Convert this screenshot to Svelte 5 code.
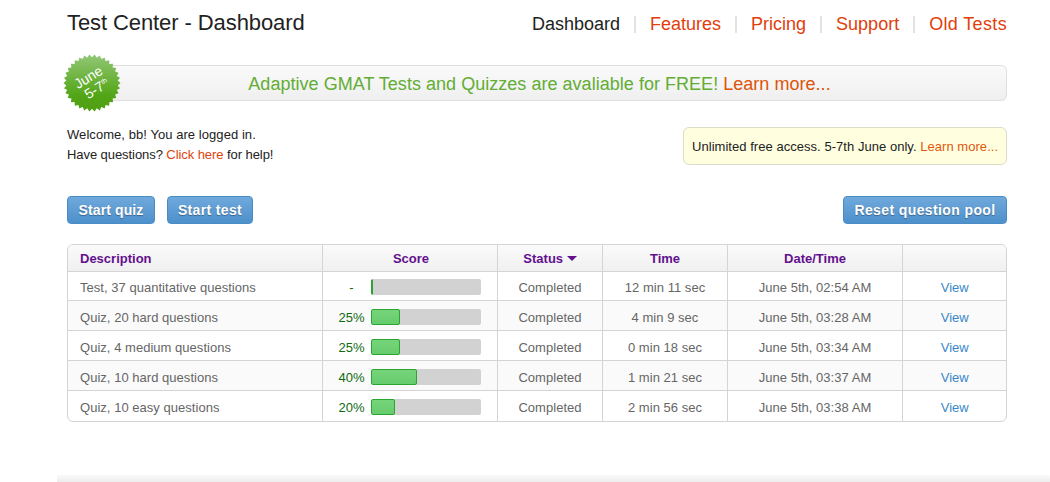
<script>
  const rows = [
    { d: 'Test, 37 quantitative questions', s: '-', w: 2, t: '12 min 11 sec', dt: 'June 5th, 02:54 AM' },
    { d: 'Quiz, 20 hard questions', s: '25%', w: 29, t: '4 min 9 sec', dt: 'June 5th, 03:28 AM' },
    { d: 'Quiz, 4 medium questions', s: '25%', w: 29, t: '0 min 18 sec', dt: 'June 5th, 03:34 AM' },
    { d: 'Quiz, 10 hard questions', s: '40%', w: 46, t: '1 min 21 sec', dt: 'June 5th, 03:37 AM' },
    { d: 'Quiz, 10 easy questions', s: '20%', w: 24, t: '2 min 56 sec', dt: 'June 5th, 03:38 AM' }
  ];
  const nav = ['Features', 'Pricing', 'Support', 'Old Tests'];
  const teeth = 34;
  const star = Array.from({ length: teeth * 2 }, (_, i) => {
    const r = i % 2 ? 25.8 : 28.5;
    const a = (i * Math.PI) / teeth;
    return `${(29 + r * Math.cos(a)).toFixed(2)},${(29 + r * Math.sin(a)).toFixed(2)}`;
  }).join(' ');
</script>

<div class="page">
  <header>
    <h1>Test Center - Dashboard</h1>
    <nav>
      <span class="current">Dashboard</span>
      {#each nav as item}
        <i class="sep"></i>
        <a href="#x">{item}</a>
      {/each}
    </nav>
  </header>

  <div class="banner">
    <svg class="badge" width="58" height="58" viewBox="0 0 58 58">
      <defs>
        <linearGradient id="bg" x1="0" y1="0" x2="0" y2="1">
          <stop offset="0" stop-color="#93c777" />
          <stop offset="0.72" stop-color="#52a516" />
          <stop offset="1" stop-color="#4f9f12" />
        </linearGradient>
      </defs>
      <polygon points={star} fill="url(#bg)" />
      <g transform="rotate(-32 29 29)" fill="#fff" font-family="Liberation Sans, Arial, sans-serif" text-anchor="middle">
        <text x="29" y="27" font-size="14">June</text>
        <text x="30" y="41" font-size="14">5-7<tspan font-size="7" dy="-5">th</tspan></text>
      </g>
    </svg>
    <p>Adaptive GMAT Tests and Quizzes are avaliable for FREE! <a href="#x">Learn more...</a></p>
  </div>

  <section class="intro">
    <div class="welcome">
      <div class="l1">Welcome, bb! You are logged in.</div>
      <div class="l2">Have questions? <a href="#x">Click here</a> for help!</div>
    </div>
    <div class="notice">Unlimited free access. 5-7th June only. <a href="#x">Learn more...</a></div>
  </section>

  <div class="actions">
    <button class="quiz">Start quiz</button>
    <button class="test">Start test</button>
    <button class="reset">Reset question pool</button>
  </div>

  <div class="table-wrap">
    <table>
      <colgroup>
        <col class="c1" /><col class="c2" /><col class="c3" /><col class="c4" /><col class="c5" /><col />
      </colgroup>
      <thead>
        <tr>
          <th class="left">Description</th>
          <th class="sc">Score</th>
          <th>Status <span class="caret"></span></th>
          <th>Time</th>
          <th>Date/Time</th>
          <th></th>
        </tr>
      </thead>
      <tbody>
        {#each rows as r}
          <tr>
            <td class="left">{r.d}</td>
            <td>
              <div class="score">
                <span class="pct">{r.s}</span>
                <span class="track"><span class="fill" style="width:{r.w}px"></span></span>
              </div>
            </td>
            <td>Completed</td>
            <td>{r.t}</td>
            <td>{r.dt}</td>
            <td><a class="view" href="#x">View</a></td>
          </tr>
        {/each}
      </tbody>
    </table>
  </div>

  <div class="footer"></div>
</div>

<style>
  :global(body) {
    margin: 0;
    background: #fff;
    font-family: "Liberation Sans", Arial, sans-serif;
    color: #1a1a1a;
    overflow: hidden;
  }
  .page {
    width: 1050px;
    height: 482px;
    box-sizing: border-box;
    padding: 0 43px 0 67px;
    position: relative;
    overflow: hidden;
  }
  a { color: #e0440e; text-decoration: none; }
  header {
    height: 65px;
    display: flex;
    justify-content: space-between;
    align-items: flex-start;
  }
  h1 {
    margin: 10px 0 0;
    font-size: 22px;
    line-height: 26px;
    font-weight: 400;
    letter-spacing: -0.09px;
    color: #222;
  }
  nav {
    display: flex;
    align-items: center;
    margin-top: 14px;
    font-size: 18px;
    line-height: 20px;
  }
  nav a { color: #e23d0b; }
  nav a:last-child { letter-spacing: 0.35px; }
  .current { color: #222; }
  .sep {
    width: 2px;
    height: 17px;
    background: #e6e2df;
    margin: 0 14px;
  }
  .banner {
    height: 36px;
    box-sizing: border-box;
    border: 1px solid #dfdfdf;
    border-left: 0;
    border-radius: 0 6px 6px 0;
    margin-left: 30px;
    background: linear-gradient(#fafafa, #efefef);
    position: relative;
    display: flex;
    align-items: center;
    justify-content: center;
    padding: 3px 24px 0 0;
  }
  .banner p {
    margin: 0;
    font-size: 18px;
    letter-spacing: 0.03px;
    color: #62ad33;
  }
  .banner a { color: #dd5409; }
  .badge {
    position: absolute;
    left: -34px;
    top: -12px;
  }
  .intro {
    display: flex;
    justify-content: space-between;
    align-items: flex-start;
    margin-top: 23px;
    height: 72px;
    font-size: 13px;
  }
  .welcome { line-height: 20px; padding-top: 1px; color: #222; }
  .l1 { letter-spacing: 0.06px; }
  .l2 { letter-spacing: -0.07px; }
  .notice {
    margin-top: 3px;
    height: 38px;
    width: 324px;
    box-sizing: border-box;
    padding: 0 8px;
    display: flex;
    align-items: center;
    white-space: pre;
    letter-spacing: 0.04px;
    background: #ffffe0;
    border: 1px solid #dcdcc8;
    border-radius: 6px;
    color: #222;
  }
  .notice a { color: #e2570d; }
  .actions {
    display: flex;
    gap: 12px;
    height: 48px;
    align-items: flex-start;
  }
  button {
    height: 28px;
    padding: 0;
    box-sizing: border-box;
    border: 1px solid #4a8cc4;
    border-radius: 4px;
    background: linear-gradient(#70a9dc, #4d90cb);
    color: #fff;
    font: 700 14px "Liberation Sans", Arial, sans-serif;
    text-shadow: 0 1px 1px rgba(0, 0, 0, .35);
  }
  .quiz { width: 88px; letter-spacing: 0.1px; }
  .test { width: 86px; letter-spacing: 0.35px; }
  .reset { width: 164px; margin-left: auto; letter-spacing: 0.39px; }
  .table-wrap {
    border: 1px solid #d4d4d4;
    border-radius: 6px;
    overflow: hidden;
    width: 940px;
    box-sizing: border-box;
  }
  table {
    width: 100%;
    border-collapse: collapse;
    table-layout: fixed;
    font-size: 13px;
  }
  .c1 { width: 254px; }
  .c2 { width: 175px; }
  .c3 { width: 105px; }
  .c4 { width: 125px; }
  .c5 { width: 175px; }
  th, td {
    padding: 0;
    border-left: 1px solid #d4d4d4;
    text-align: center;
  }
  th:first-child, td:first-child { border-left: 0; }
  th {
    height: 26px;
    font-size: 13px;
    font-weight: 700;
    padding-left: 1px;
    color: #63108f;
    background: linear-gradient(#fafafa, #f0f0f0);
    border-bottom: 1px solid #d4d4d4;
  }
  th.sc { padding-left: 3px; }
  td {
    box-sizing: border-box;
    height: 30px;
    padding: 3px 0 0 1px;
    letter-spacing: 0.03px;
    color: #666;
    border-top: 1px solid #d4d4d4;
  }
  tbody tr:first-child td { border-top: 0; height: 29px; padding-top: 2px; }
  tbody tr:nth-child(even) td { background: #fafafa; }
  th.left, td.left { text-align: left; padding-left: 12px; }
  .caret {
    display: inline-block;
    width: 0;
    height: 0;
    border: 5px solid transparent;
    border-top: 5px solid #63108f;
    border-bottom: 0;
    vertical-align: 2px;
  }
  .score {
    display: flex;
    align-items: center;
    margin-left: 15px;
  }
  .pct {
    width: 26px;
    margin-right: 6px;
    text-align: center;
    color: #11690f;
  }
  .track {
    width: 110px;
    height: 16px;
    background: #d2d2d2;
    border-radius: 2px;
    display: block;
    overflow: hidden;
  }
  .fill {
    display: block;
    height: 100%;
    box-sizing: border-box;
    background: linear-gradient(#76d47b, #66cc6c);
    border: 1px solid #2aa52f;
    border-radius: 2px;
  }
  .view { color: #3a87c8; }
  .footer {
    position: absolute;
    left: 57px;
    right: 0;
    top: 475px;
    height: 7px;
    background: linear-gradient(#fbfbfb, #ececec);
  }
</style>
